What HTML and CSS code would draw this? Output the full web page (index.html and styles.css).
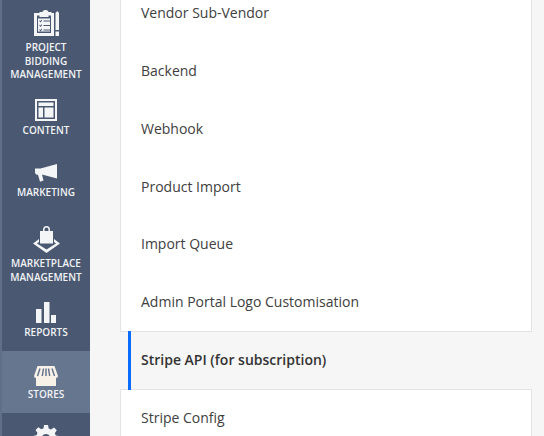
FILE: index.html
```html
<!DOCTYPE html>
<html lang="en">
<head>
<meta charset="utf-8">
<title>Stores</title>
<link rel="stylesheet" href="styles.css">
</head>
<body>
<div class="app">
  <nav class="sidebar">
    <a class="nav-item nav-project">
      <svg class="ico" width="26" height="26" viewBox="0 0 26 26"><path class="w" fill-rule="evenodd" d="M1 3h5.500V2h3a3 2 0 0 1 3.500-2 3 2 0 0 1 2.500 2h3v1H21v23H1zM4 5.500V23h14V5.500h-2.500V7h-9V5.500z"/><path class="w" d="M5 8.500h12v13H5z"/><path class="d" d="M6.500 10l1 1 1.500-1.500v1.200L7.500 12.500l-1-1.200zM6.500 14.500l1 1 1.500-1.500v1.200L7.500 17l-1-1.200zM6.500 19l1 1 1.500-1.500v1.200L7.500 21.500l-1-1.200zM10.500 10.500h6.500v1h-6.500zM10.500 15h6.500v1h-6.500zM10.500 19.500h6.500v1h-6.500z"/><path class="w" d="M22.500 3l1.800-2 1.700 2v17h-3.500zM22.500 21.500H26V26h-3.500z"/></svg>
      <span>PROJECT<br>BIDDING<br>MANAGEMENT</span>
    </a>
    <a class="nav-item nav-content">
      <svg class="ico" width="22" height="22" viewBox="0 0 22 22"><path class="w" fill-rule="evenodd" d="M0 0h22v22H0zM2 2v18h18V2zM3.500 3.500h15V7h-15zM3.500 8.500h4.500v10H3.500zM9.500 8.500h9v10h-9z"/></svg>
      <span>CONTENT</span>
    </a>
    <a class="nav-item nav-marketing">
      <svg class="ico" width="22" height="18" viewBox="0 0 22 18"><path class="w" d="M0 4.500h5.500L22 0v14.500L7 10.500l1.500 6-3.500 1.200-2-7H1.500L0 9z"/></svg>
      <span>MARKETING</span>
    </a>
    <a class="nav-item nav-marketplace">
      <svg class="ico" width="27" height="27" viewBox="0 0 27 27"><path class="w" fill-rule="evenodd" d="M7 5h3V3.800a3.500 3.800 0 0 1 7 0V5h3v12.500H7zM11.500 5h4V3.800a2 2.300 0 0 0-4 0z"/><path class="w" d="M6 13v3L4 17.500l9.500 6 9.500-6-2-1.500v-3l6 4.500L13.500 27 0 17.500z"/></svg>
      <span>MARKETPLACE<br>MANAGEMENT</span>
    </a>
    <a class="nav-item nav-reports">
      <svg class="ico" width="20" height="21" viewBox="0 0 20 21"><path class="w" d="M0 7h5.500v14H0zM8 0h5.500v21H8zM15 13h5v8h-5z"/></svg>
      <span>REPORTS</span>
    </a>
    <a class="nav-item nav-active">
      <svg class="ico" width="24" height="20" viewBox="0 0 24 20"><path class="c" d="M3.500 0h17L24 10a2 2 0 0 1-2 2v8H2v-8a2 2 0 0 1-2-2z"/><path class="s" d="M6 2.500L3.500 10M9.500 2.500L8.300 10M12 2.500V10M14.500 2.500L15.700 10M18 2.500l2.500 7.500"/></svg>
      <span>STORES</span>
    </a>
    <a class="nav-item nav-gear">
      <svg class="ico" width="26" height="26" viewBox="0 0 26 26"><path class="w" fill-rule="evenodd" d="M11 0h4l.7 3.500 2.300 1 3-2 2.800 2.800-2 3 1 2.300L26 11v4l-3.500.7-1 2.300 2 3-2.800 2.800-3-2-2.300 1L15 26h-4l-.7-3.500-2.300-1-3 2L2.200 20.700l2-3-1-2.300L0 15v-4l3.500-.7 1-2.300-2-3L5.300 2.200l3 2 2.300-1zM13 9a4 4 0 1 0 0 8 4 4 0 0 0 0-8z"/></svg>
    </a>
  </nav>
  <main class="main">
    <ul class="panel panel-top">
      <li class="row">Vendor Sub-Vendor</li>
      <li class="row">Backend</li>
      <li class="row">Webhook</li>
      <li class="row">Product Import</li>
      <li class="row">Import Queue</li>
      <li class="row">Admin Portal Logo Customisation</li>
    </ul>
    <div class="row row-active">Stripe API (for subscription)</div>
    <ul class="panel">
      <li class="row row-last">Stripe Config</li>
    </ul>
  </main>
</div>
</body>
</html>
```
FILE: styles.css
```css
html, body {
  margin: 0;
  height: 100%;
  overflow: hidden;
  background: #f6f6f6;
}
.app {
  display: flex;
  height: 436px;
  overflow: hidden;
  font-family: "Open Sans", sans-serif;
}
.sidebar {
  flex: 0 0 88px;
  display: flex;
  flex-direction: column;
  background: #4a5872;
  border-left: 2px solid #5f6f8a;
}
.nav-item {
  display: flex;
  flex-direction: column;
  align-items: center;
  flex: none;
  padding-bottom: 12px;
  color: #f1f3f5;
  font-size: 10px;
  font-weight: 600;
  line-height: 13.500px;
  text-align: center;
  white-space: nowrap;
}
.ico { flex: none; display: block; margin-bottom: 3px; }
.nav-project { padding-top: 10px; }
.nav-project .ico { margin-bottom: 5px; }
.nav-content { padding-top: 5px; }
.nav-marketing { padding-top: 15px; }
.nav-marketing .ico { margin-bottom: 4px; }
.nav-marketplace { padding-top: 14px; }
.nav-marketplace .ico { margin-bottom: 4.500px; }
.nav-reports { padding-top: 5.500px; }
.nav-reports .ico { margin-bottom: 3px; }
.nav-active { padding-top: 15px; padding-bottom: 11px; background: #67768f; }
.nav-active .ico { margin-bottom: 2px; }
.nav-gear { padding-top: 12px; }
.w { fill: #f4f5f7; }
.d { fill: #4a5872; }
.c { fill: #f7f1e8; }
.s { stroke: #67768f; stroke-width: 1.500; fill: none; }
.main {
  flex: 0 0 412px;
  margin: -17px 0 0 30px;
  display: flex;
  flex-direction: column;
}
.panel {
  list-style: none;
  margin: 0;
  padding: 0;
  background: #fff;
  border: 1px solid #e3e3e3;
}
.panel-top { padding-bottom: 0.500px; }
.row {
  flex: none;
  height: 57.750px;
  box-sizing: border-box;
  display: flex;
  align-items: center;
  padding-left: 20px;
  font-size: 14px;
  color: #404040;
}
.row-last { padding-bottom: 2px; }
.row-active {
  position: relative;
  height: 59px;
  margin: -1px 0 -1px 8px;
  padding: 0 0 2px 10px;
  border-left: 3px solid #0a6cff;
  font-weight: 600;
  color: #333;
}
```
